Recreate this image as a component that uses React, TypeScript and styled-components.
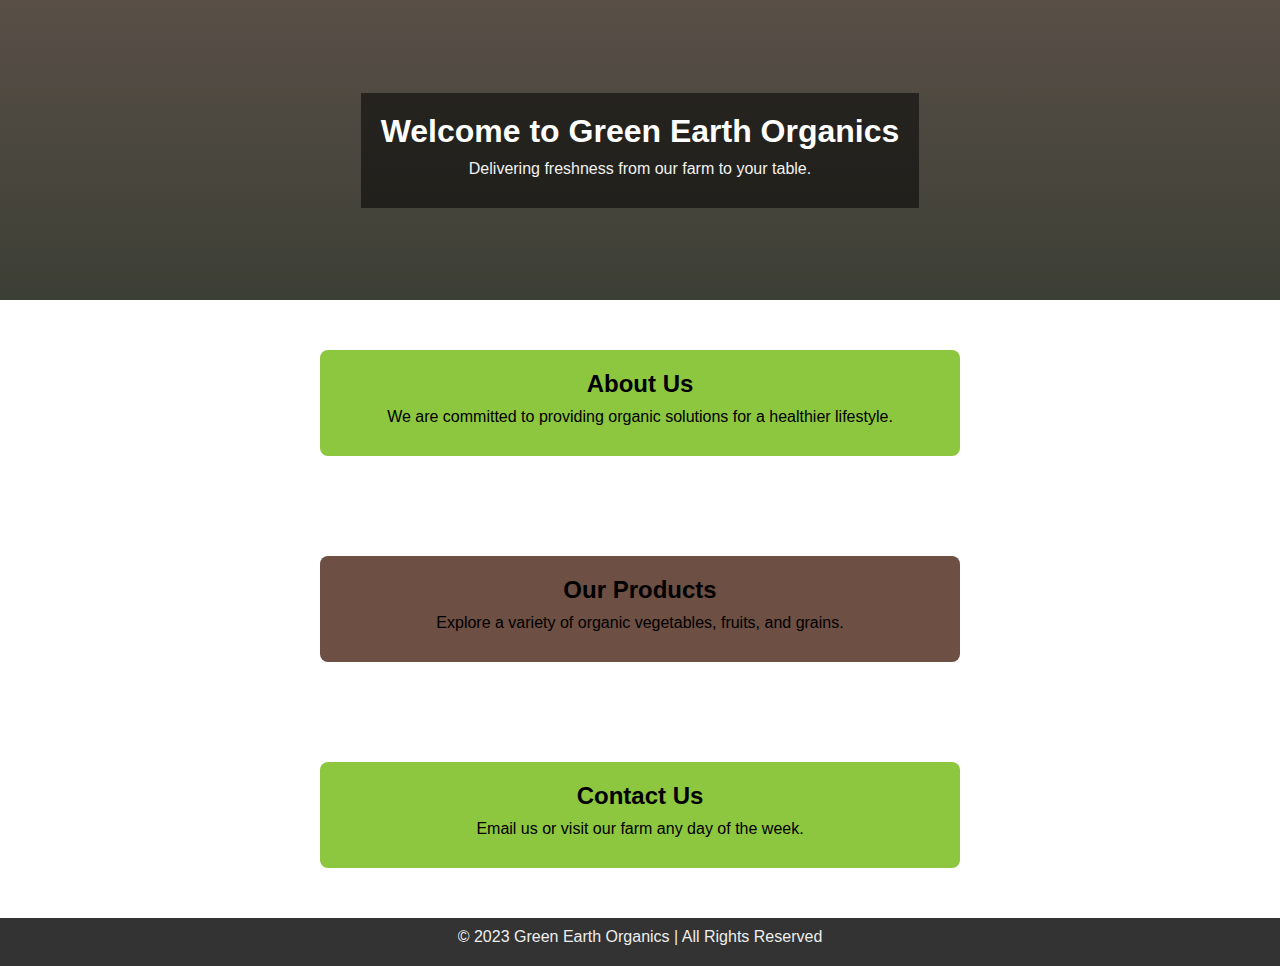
import React from "react";
import styled, { createGlobalStyle } from "styled-components";

const GlobalStyle = createGlobalStyle`
  html, body {
    margin: 0;
    padding: 0;
    background: #ffffff;
    font-family: "Liberation Sans", Arial, sans-serif;
  }
`;

const Hero = styled.header`
  height: 300px;
  display: flex;
  align-items: center;
  justify-content: center;
  background: linear-gradient(to bottom, #594f47 0%, #3c3f35 100%);
`;

const HeroBox = styled.div`
  background: rgba(0, 0, 0, 0.52);
  padding: 20px;
  text-align: center;
  color: #ffffff;
`;

const HeroTitle = styled.h1`
  margin: 0;
  font-size: 32px;
  font-weight: bold;
  line-height: 37px;
`;

const HeroText = styled.p`
  margin: 10px 0;
  font-size: 16px;
  line-height: 18px;
  color: #f2f2f2;
`;

const Main = styled.main`
  display: flex;
  flex-direction: column;
  align-items: center;
  gap: 100px;
  padding: 50px 0;
`;

const Card = styled.section<{ $bg: string }>`
  width: 640px;
  box-sizing: border-box;
  padding: 20px;
  border-radius: 8px;
  background: ${(p) => p.$bg};
  text-align: center;
  color: #000;
`;

const CardTitle = styled.h2`
  margin: 0;
  font-size: 24px;
  font-weight: bold;
  line-height: 28px;
`;

const CardText = styled.p`
  margin: 10px 0;
  font-size: 16px;
  line-height: 18px;
`;

const Footer = styled.footer`
  background: #333333;
  color: #eeeeee;
  text-align: center;
  font-size: 16px;
  line-height: 18px;
  padding: 10px 0 20px;
`;

const cards = [
  {
    title: "About Us",
    text: "We are committed to providing organic solutions for a healthier lifestyle.",
    bg: "#8dc63f",
  },
  {
    title: "Our Products",
    text: "Explore a variety of organic vegetables, fruits, and grains.",
    bg: "#6d4f43",
  },
  {
    title: "Contact Us",
    text: "Email us or visit our farm any day of the week.",
    bg: "#8dc63f",
  },
];

export default function App() {
  return (
    <>
      <GlobalStyle />
      <Hero>
        <HeroBox>
          <HeroTitle>Welcome to Green Earth Organics</HeroTitle>
          <HeroText>Delivering freshness from our farm to your table.</HeroText>
        </HeroBox>
      </Hero>
      <Main>
        {cards.map((c) => (
          <Card key={c.title} $bg={c.bg}>
            <CardTitle>{c.title}</CardTitle>
            <CardText>{c.text}</CardText>
          </Card>
        ))}
      </Main>
      <Footer>© 2023 Green Earth Organics | All Rights Reserved</Footer>
    </>
  );
}
